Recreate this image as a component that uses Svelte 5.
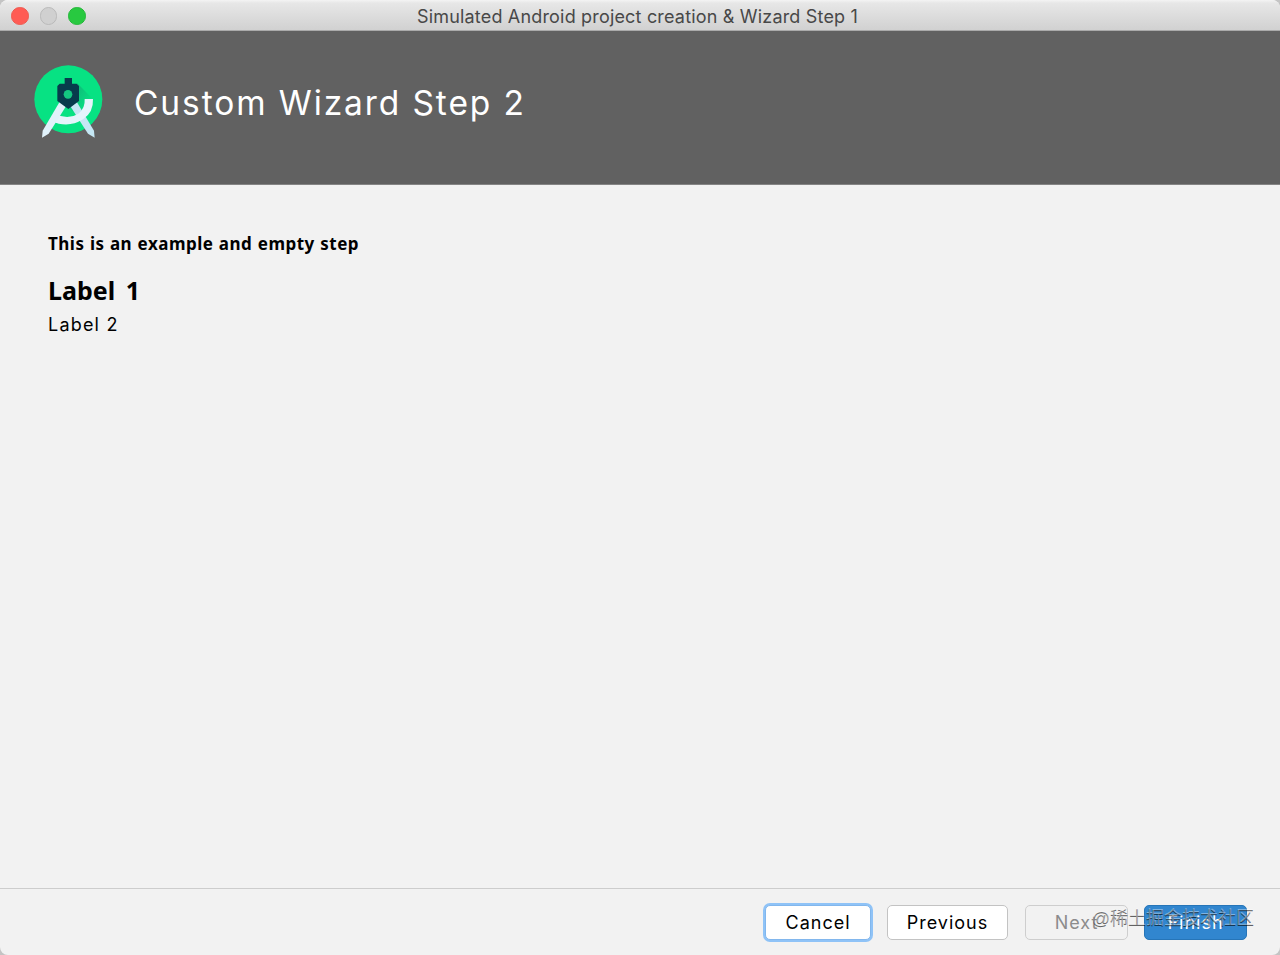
<script>
	const title = 'Simulated Android project creation & Wizard Step 1';
	const step = 'Custom Wizard Step 2';
	const lights = ['close', 'minimize', 'zoom'];
	const buttons = [
		{ label: 'Cancel', kind: 'focused' },
		{ label: 'Previous', kind: 'normal' },
		{ label: 'Next', kind: 'disabled' },
		{ label: 'Finish', kind: 'primary' }
	];
</script>

<div class="window">
	<div class="titlebar">
		<div class="lights">
			{#each lights as light}
				<span class="light {light}"></span>
			{/each}
		</div>
		<div class="title"><span>{title}</span></div>
	</div>

	<header>
		<svg class="logo" viewBox="0 0 270 270" aria-hidden="true">
			<defs>
				<linearGradient id="shade" x1="0" y1="0" x2="1" y2="1">
					<stop offset="0" stop-color="#12a873" />
					<stop offset="0.6" stop-color="#07e283" />
				</linearGradient>
			</defs>
			<circle cx="133" cy="130" r="102" fill="#07e283" />
			<path d="M160 82 224 147A102 102 0 0 1 194 212L130 150Z" fill="url(#shade)" />
			<path d="M158 137 210 224 212 245 192 233 139 151Z" fill="#c5e7f4" />
			<path d="M94 174Q132 193 163 173Q184 157 182 129H207Q209 169 177 190Q130 219 82 194Z" fill="#e5f4fc" />
			<path d="M107 137 56 224 54 245 74 233 126 151Z" fill="#e1f2fb" />
			<path d="M122 66h22v17h14l7 7v45l-32 24-33-24V90l7-7h15Z" fill="#073b4c" />
			<circle cx="132" cy="115" r="13" fill="#14c781" />
		</svg>
		<h1><span>{step}</span></h1>
	</header>

	<main>
		<p class="description"><span>This is an example and empty step</span></p>
		<h2><span>Label 1</span></h2>
		<p class="label"><span>Label 2</span></p>
	</main>

	<footer>
		{#each buttons as { label, kind }}
			<button class={kind} disabled={kind === 'disabled'}><span>{label}</span></button>
		{/each}
		<div class="watermark">@稀土掘金技术社区</div>
	</footer>
</div>

<style>
	:global(body) {
		background: #c4c4c4;
		overflow: hidden;
	}

	.window {
		display: flex;
		flex-direction: column;
		box-sizing: border-box;
		width: 1280px;
		height: 955px;
		border-radius: 8px;
		overflow: hidden;
		background: #f2f2f2;
		font-family: Inter, sans-serif;
		color: #000;
	}

	.titlebar {
		display: grid;
		grid-template-columns: 96px 1fr 101px;
		align-items: center;
		box-sizing: border-box;
		height: 31px;
		flex: none;
		background: linear-gradient(#f4f4f4, #e7e7e7 10%, #d1d1d1);
		border-bottom: 1px solid #aaa;
	}

	.lights {
		display: flex;
		gap: 11px;
		padding-left: 11px;
	}

	.light {
		box-sizing: border-box;
		width: 17.5px;
		height: 17.5px;
		border-radius: 50%;
	}

	.close {
		background: #ff5b54;
		border: 1px solid #ed5b51;
	}

	.minimize {
		background: #d0d0d0;
		border: 1px solid #b9b9b9;
	}

	.zoom {
		background: #28c940;
		border: 1px solid #25b83a;
	}

	.title {
		text-align: center;
		font-size: 18px;
		line-height: 30px;
		letter-spacing: 0.18px;
		padding-top: 2px;
		color: #484848;
		white-space: nowrap;
	}

	header {
		display: flex;
		align-items: flex-start;
		box-sizing: border-box;
		height: 154px;
		flex: none;
		padding: 25px 24px 0;
		background: #616161;
		border-bottom: 1px solid #858585;
	}

	.logo {
		width: 90px;
		height: 90px;
		flex: none;
	}

	h1 {
		margin: 26px 0 0 20px;
		font-size: 33.5px;
		font-weight: 400;
		line-height: 42px;
		letter-spacing: 1.9px;
		color: #fff;
		white-space: nowrap;
	}

	main {
		flex: 1;
		padding: 46px 48px 0;
	}

	.description,
	h2 {
		margin: 0;
		font-family: "Noto Sans", sans-serif;
		font-weight: 700;
	}

	.description {
		font-size: 17px;
		line-height: 26px;
		letter-spacing: 0.5px;
		word-spacing: 0.5px;
	}

	h2 {
		margin-top: 16px;
		font-size: 25px;
		line-height: 34px;
		word-spacing: 4px;
	}

	.label {
		margin: 6px 0 0;
		font-size: 18px;
		line-height: 24px;
		letter-spacing: 1.2px;
	}

	footer {
		position: relative;
		display: flex;
		align-items: flex-start;
		box-sizing: border-box;
		height: 67px;
		flex: none;
		padding: 16px 33px 0 765px;
		border-top: 1px solid #cdcdcd;
	}

	button {
		box-sizing: border-box;
		height: 35px;
		padding: 1px 0 0;
		border: 1px solid #c3c3c3;
		border-radius: 5px;
		background: #fff;
		font: 18px/32px Inter, sans-serif;
		letter-spacing: 1px;
		color: #000;
		white-space: nowrap;
	}

	.focused {
		width: 106px;
		border-color: #82b7ed;
		box-shadow: 0 0 0 2px #8fc3f7;
	}

	.normal {
		width: 121px;
		margin-left: 16px;
	}

	.disabled {
		width: 103px;
		margin-left: 17px;
		background: #f2f2f2;
		border-color: #cecece;
		color: #8c8c8c;
	}

	.primary {
		width: 103px;
		margin-left: 16px;
		background: #3186cf;
		border-color: #2675b8;
		color: #fff;
	}

	.watermark {
		position: absolute;
		top: 15px;
		right: 26px;
		font-family: "Liberation Sans", "Noto Sans CJK SC", sans-serif;
		font-size: 18px;
		line-height: 28px;
		color: rgba(255, 255, 255, 0.4);
		text-shadow: 0 1px 0 rgba(0, 0, 0, 0.6);
		white-space: nowrap;
	}
</style>
